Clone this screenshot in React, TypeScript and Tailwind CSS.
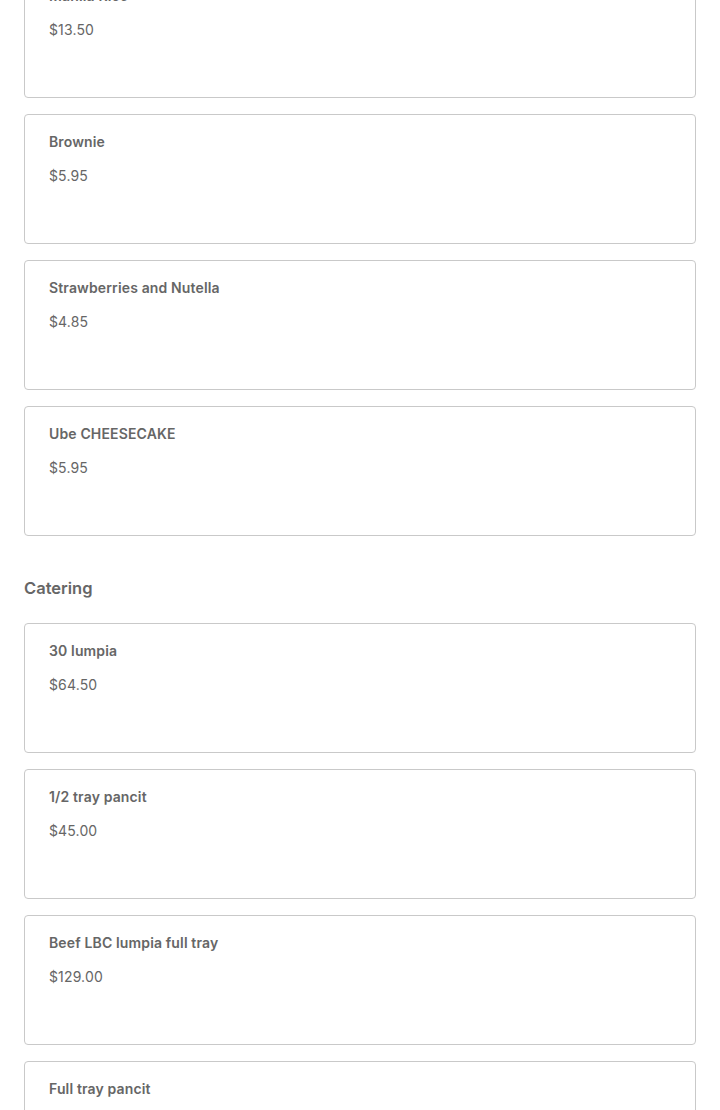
const desserts = [
  { name: 'Manila Rice', price: '$13.50' },
  { name: 'Brownie', price: '$5.95' },
  { name: 'Strawberries and Nutella', price: '$4.85' },
  { name: 'Ube CHEESECAKE', price: '$5.95' },
];

const catering = [
  { name: '30 lumpia', price: '$64.50' },
  { name: '1/2 tray pancit', price: '$45.00' },
  { name: 'Beef LBC lumpia full tray', price: '$129.00' },
  { name: 'Full tray pancit', price: '$85.00' },
];

function ItemCard({ name, price }: { name: string; price: string }) {
  return (
    <div className="h-[130px] rounded-[4px] border border-[#c9c9c9] bg-white px-6 pt-[17px]">
      <p className="text-[14px] leading-5 font-semibold tracking-[0.01em] text-[#666]">{name}</p>
      <p className="mt-[14px] text-[14px] leading-5 tracking-[0.01em] text-[#666]">{price}</p>
    </div>
  );
}

export default function App() {
  return (
    <div className="h-[1110px] overflow-hidden bg-white px-6" style={{ fontFamily: 'Inter, "Noto Sans", sans-serif' }}>
      <div className="-mt-[32px] flex flex-col gap-4">
        {desserts.map((d) => <ItemCard key={d.name} {...d} />)}
      </div>

      <h2 className="mt-[40px] text-[16.5px] leading-6 font-semibold text-[#666]">Catering</h2>

      <div className="mt-[23px] flex flex-col gap-4">
        {catering.map((d) => <ItemCard key={d.name} {...d} />)}
      </div>
    </div>
  );
}
